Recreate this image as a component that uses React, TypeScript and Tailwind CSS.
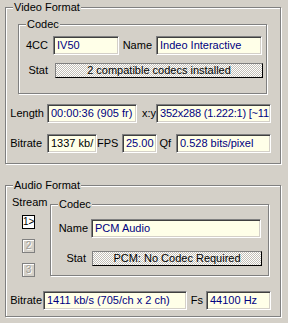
import React from 'react';

type BoxProps = { className?: string; children?: React.ReactNode };

// etched group box with its caption sitting on the top border
const Group = ({ title, className = '', children }: BoxProps & { title: string }) => (
  <div className={`relative shrink-0 border border-[#808080] shadow-[inset_1px_1px_0_#fff,1px_1px_0_#fff] ${className}`}>
    <span className="absolute left-[7px] -top-[7px] bg-[#d4d0c8] px-[1px] leading-[13px]">{title}</span>
    {children}
  </div>
);

const Label = ({ className = '', children }: BoxProps) => (
  <div className={`shrink-0 text-right whitespace-nowrap ${className}`}>{children}</div>
);

const Field = ({ className = '', children }: BoxProps) => (
  <div
    className={`h-[19px] shrink-0 overflow-hidden whitespace-nowrap bg-[#ffffe8] border border-t-[#808080] border-l-[#808080] border-r-white border-b-white shadow-[inset_1px_1px_0_#404040,inset_-1px_-1px_0_#d4d0c8] pl-[3px] pt-[1px] leading-[15px] ${className}`}
  >
    {children}
  </div>
);

const StatBar = ({ className = '', children }: BoxProps) => (
  <div
    className={`h-[15px] shrink-0 overflow-hidden whitespace-nowrap text-center leading-[13px] border border-t-[#808080] border-l-[#808080] border-r-black border-b-black bg-[image:repeating-conic-gradient(#c4c0b8_0_25%,#ffffff_0_50%)] bg-[length:2px_2px] ${className}`}
  >
    {children}
  </div>
);

const StreamButton = ({ active, className = '', children }: BoxProps & { active?: boolean }) => (
  <div
    className={`ml-[16px] w-[13px] h-[14px] text-center text-[10px] leading-[12px] ${
      active
        ? 'border border-black bg-white text-black'
        : 'border border-[#808080] shadow-[inset_1px_1px_0_#fff] text-[#a09c94] [text-shadow:1px_1px_0_#fff]'
    } ${className}`}
  >
    {children}
  </div>
);

export default function App() {
  return (
    <div className="w-[288px] h-[323px] overflow-hidden bg-[#d4d0c8] pl-[5px] pt-[7px] text-[11px] leading-[13px] text-black font-['Liberation_Sans',Arial,sans-serif]">
      {/* Video */}
      <Group title="Video Format" className="w-[276px] h-[157px]">
        <Group title="Codec" className="ml-[12px] mt-[16px] w-[249px] h-[70px]">
          <div className="mt-[11px] flex items-center">
            <Label className="w-[34px] pr-[5px]">4CC</Label>
            <Field className="w-[66px] text-[#000080]">IV50</Field>
            <Label className="w-[37px] pr-[4px]">Name</Label>
            <Field className="w-[106px] text-[#000080]">Indeo Interactive</Field>
          </div>
          <div className="mt-[8px] flex items-center">
            <Label className="w-[36px] pr-[7px]">Stat</Label>
            <StatBar className="w-[208px]">2 compatible codecs installed</StatBar>
          </div>
        </Group>

        <div className="mt-[10px] flex items-center">
          <Label className="w-[41px] pr-[3px]">Length</Label>
          <Field className="w-[90px] text-[#000080]">00:00:36 (905 fr)</Field>
          <Label className="w-[19px] pr-0">x:y</Label>
          <Field className="w-[115px] pl-[2px] tracking-[-0.2px] text-[#000080]">352x288 (1.222:1) [~11</Field>
        </div>
        <div className="mt-[11px] flex items-center">
          <Label className="w-[41px] pr-[5px]">Bitrate</Label>
          <Field className="w-[50px] text-black">1337 kb/</Field>
          <Label className="w-[25px] pr-[4px]">FPS</Label>
          <Field className="w-[35px] text-[#000080]">25.00</Field>
          <Label className="w-[19px] pr-[5px]">Qf</Label>
          <Field className="w-[95px] text-[#000080]">0.528 bits/pixel</Field>
        </div>
      </Group>

      {/* Audio */}
      <Group title="Audio Format" className="mt-[21px] w-[276px] h-[132px]">
        <div className="flex">
          <div className="w-[44px] shrink-0">
            <div className="mt-[10px] pl-[6px]">Stream</div>
            <StreamButton active className="mt-[6px]">1&gt;</StreamButton>
            <StreamButton className="mt-[10px]">2</StreamButton>
            <StreamButton className="mt-[10px]">3</StreamButton>
          </div>
          <Group title="Codec" className="mt-[18px] w-[219px] h-[72px]">
            <div className="mt-[14px] flex items-center">
              <Label className="w-[40px] pr-[3px]">Name</Label>
              <Field className="w-[170px] text-[#000080]">PCM Audio</Field>
            </div>
            <div className="mt-[13px] flex items-center">
              <Label className="w-[41px] pr-[6px]">Stat</Label>
              <StatBar className="w-[170px]">PCM: No Codec Required</StatBar>
            </div>
          </Group>
        </div>
        <div className="mt-[14px] flex items-center">
          <Label className="w-[37px] pr-[1px]">Bitrate</Label>
          <Field className="w-[144px] text-[#000080]">1411 kb/s (705/ch x 2 ch)</Field>
          <Label className="w-[19px] pr-[3px]">Fs</Label>
          <Field className="w-[65px] text-[#000080]">44100 Hz</Field>
        </div>
      </Group>
    </div>
  );
}
